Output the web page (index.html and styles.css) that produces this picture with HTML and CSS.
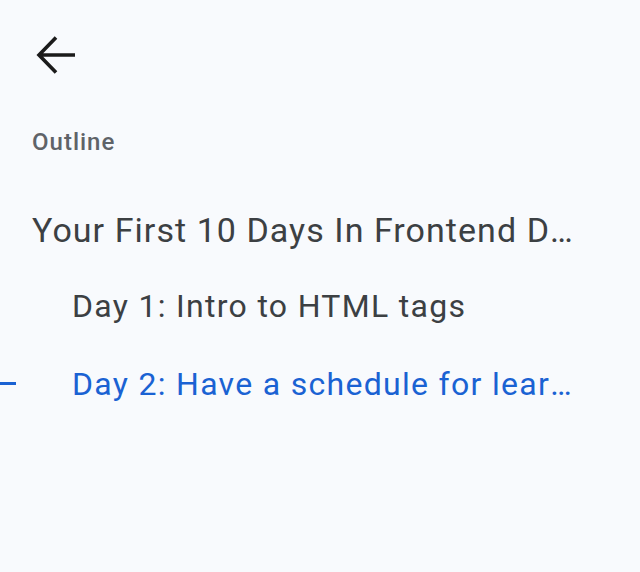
FILE: index.html
```html
<!DOCTYPE html>
<html lang="en">
<head>
<meta charset="utf-8">
<title>Outline</title>
<link rel="stylesheet" href="styles.css">
</head>
<body>
<aside class="panel">
  <div class="header">
    <button class="back" aria-label="Back">
      <svg viewBox="0 0 40 40" width="40" height="40" aria-hidden="true">
        <path d="M39 19H3M20 1.5L3 19L20 36.5" fill="none" stroke="#1b1b1b" stroke-width="3.6" stroke-linecap="butt" stroke-linejoin="miter"/>
      </svg>
    </button>
  </div>
  <div class="label">Outline</div>
  <ul class="outline">
    <li class="item level1">Your First 10 Days In Frontend Development</li>
    <li class="item level2">Day 1: Intro to HTML tags</li>
    <li class="item level2 active">Day 2: Have a schedule for learning</li>
  </ul>
</aside>
</body>
</html>
```
FILE: styles.css
```css
html, body {
  margin: 0;
  padding: 0;
  background: #f8fafd;
  font-family: Roboto, "Noto Sans", Arial, sans-serif;
}
.panel {
  width: 584px;
  padding-top: 36px;
}
.header {
  display: flex;
  padding-left: 36px;
}
.back {
  display: flex;
  border: 0;
  padding: 0;
  background: none;
  width: 40px;
  height: 40px;
}
.label {
  margin-top: 52px;
  padding-left: 32px;
  font-size: 24px;
  font-weight: 500;
  letter-spacing: 1px;
  color: #5f6368;
  line-height: 28px;
}
.outline {
  list-style: none;
  margin: 36px 0 0;
  padding: 0;
}
.item {
  position: relative;
  white-space: nowrap;
  overflow: hidden;
  text-overflow: ellipsis;
  line-height: 76px;
  color: #3c4043;
  letter-spacing: 1.3px;
}
.level1 {
  padding-left: 32px;
  font-size: 34px;
  letter-spacing: 1.05px;
}
.level2 {
  padding-left: 72px;
  font-size: 32px;
}
.active {
  margin-top: 2px;
  color: #1a62d3;
}
.active::before {
  content: "";
  position: absolute;
  left: 0;
  top: 36px;
  width: 16px;
  height: 3px;
  background: #1a62d3;
}
```
